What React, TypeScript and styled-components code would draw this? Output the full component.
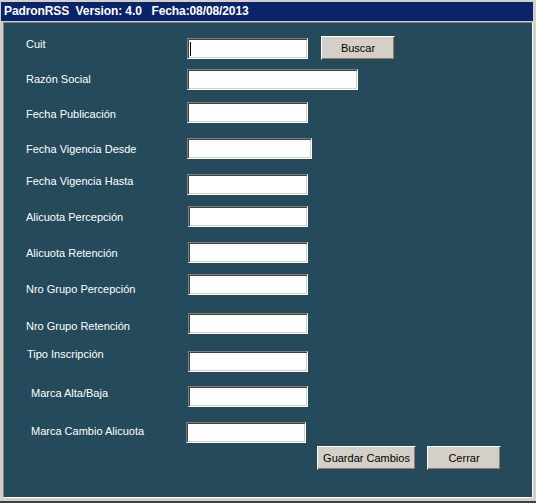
import * as React from "react";
import styled, {createGlobalStyle} from "styled-components";

const face = "#d4d0c8";
const shadow = "#808080";
const darkShadow = "#404040";
const panelColor = "#244a5b";
const captionColor = "#0a246a";

const GlobalStyle = createGlobalStyle`
	html, body {
		margin: 0;
		padding: 0;
		background: ${face};
	}
	* {
		box-sizing: border-box;
	}
`;

const Window = styled.div`
	width: 536px;
	height: 503px;
	background: ${face};
	padding: 2px 2px 0 1px;
	border-bottom: 2px solid ${darkShadow};
	display: flex;
	flex-direction: column;
	font-family: "Liberation Sans", Arial, sans-serif;
`;

const TitleBar = styled.div`
	height: 19px;
	margin-right: 1px;
	background: ${captionColor};
	color: #ffffff;
	font-weight: 700;
	font-size: 12px;
	letter-spacing: -0.1px;
	line-height: 19px;
	padding-left: 3px;
	white-space: pre;
`;

const Panel = styled.div`
	margin: 1px 1px 0 2px;
	height: 476px;
	background: ${panelColor};
	border: 1px solid;
	border-color: ${shadow} #ffffff #ffffff ${shadow};
	padding: 15px 0 0 22px;
	display: flex;
	flex-direction: column;
`;

const Row = styled.div<{$gap: number}>`
	display: flex;
	align-items: flex-start;
	height: 21px;
	margin-top: ${(p) => p.$gap}px;
`;

const Label = styled.span<{$shift: number; $indent: number}>`
	width: 161px;
	padding-left: ${(p) => p.$indent}px;
	margin-top: ${(p) => p.$shift}px;
	color: #ffffff;
	font-size: 11px;
	line-height: 13px;
	white-space: nowrap;
`;

const TextBox = styled.div<{$width: number; $nudge: number}>`
	width: ${(p) => p.$width}px;
	height: 21px;
	margin-left: ${(p) => p.$nudge}px;
	background: #ffffff;
	border: 1px solid;
	border-color: ${shadow} #ffffff #ffffff ${shadow};
	box-shadow: inset 1px 1px 0 ${darkShadow}, inset -1px -1px 0 ${face};
	padding: 2px 0 0 2px;
	display: flex;
`;

const Caret = styled.span`
	width: 1px;
	height: 14px;
	margin-top: 1px;
	background: #000000;
`;

const Button = styled.button<{$width: number}>`
	width: ${(p) => p.$width}px;
	height: 24px;
	padding: 0;
	background: ${face};
	color: #000000;
	font-family: "Liberation Sans", Arial, sans-serif;
	font-size: 11px;
	line-height: 20px;
	border: 1px solid;
	border-color: #ffffff ${darkShadow} ${darkShadow} #ffffff;
	box-shadow: inset -1px -1px 0 ${shadow}, inset 1px 1px 0 ${face};
	text-align: center;
`;

const SearchButton = styled(Button)`
	margin: -2px 0 0 13px;
`;

const ButtonBar = styled.div`
	display: flex;
	gap: 11px;
	margin: 3px 0 0 291px;
`;

interface Field {
	label: string;
	gap: number;
	shift: number;
	indent?: number;
	width?: number;
	nudge?: number;
}

const fields: Field[] = [
	{label: "Cuit", gap: 0, shift: 0},
	{label: "Razón Social", gap: 10, shift: 4, width: 171},
	{label: "Fecha Publicación", gap: 12, shift: 6},
	{label: "Fecha Vigencia Desde", gap: 15, shift: 5, width: 125},
	{label: "Fecha Vigencia Hasta", gap: 15, shift: 1},
	{label: "Alicuota Percepción", gap: 11, shift: 5, width: 120, nudge: 1},
	{label: "Alicuota Retención", gap: 15, shift: 5, width: 120, nudge: 1},
	{label: "Nro Grupo Percepción", gap: 11, shift: 9, width: 120, nudge: 1},
	{label: "Nro Grupo Retención", gap: 18, shift: 7, width: 120, nudge: 1},
	{label: "Tipo Inscripción", gap: 17, shift: -3, indent: 1, width: 120, nudge: 1},
	{label: "Marca Alta/Baja", gap: 14, shift: 1, indent: 5, width: 120, nudge: 1},
	{label: "Marca Cambio Alicuota", gap: 15, shift: 3, indent: 5, width: 120, nudge: -1},
];

export default function App() {
	return (
		<>
			<GlobalStyle />
			<Window>
				<TitleBar>{"PadronRSS  Version: 4.0   Fecha:08/08/2013"}</TitleBar>
				<Panel>
					{fields.map((f, i) => (
						<Row key={f.label} $gap={f.gap}>
							<Label $shift={f.shift} $indent={f.indent ?? 0}>
								{f.label}
							</Label>
							<TextBox $width={f.width ?? 121} $nudge={f.nudge ?? 0}>
								{i === 0 && <Caret />}
							</TextBox>
							{i === 0 && <SearchButton $width={74}>Buscar</SearchButton>}
						</Row>
					))}
					<ButtonBar>
						<Button $width={99}>Guardar Cambios</Button>
						<Button $width={74}>Cerrar</Button>
					</ButtonBar>
				</Panel>
			</Window>
		</>
	);
}
